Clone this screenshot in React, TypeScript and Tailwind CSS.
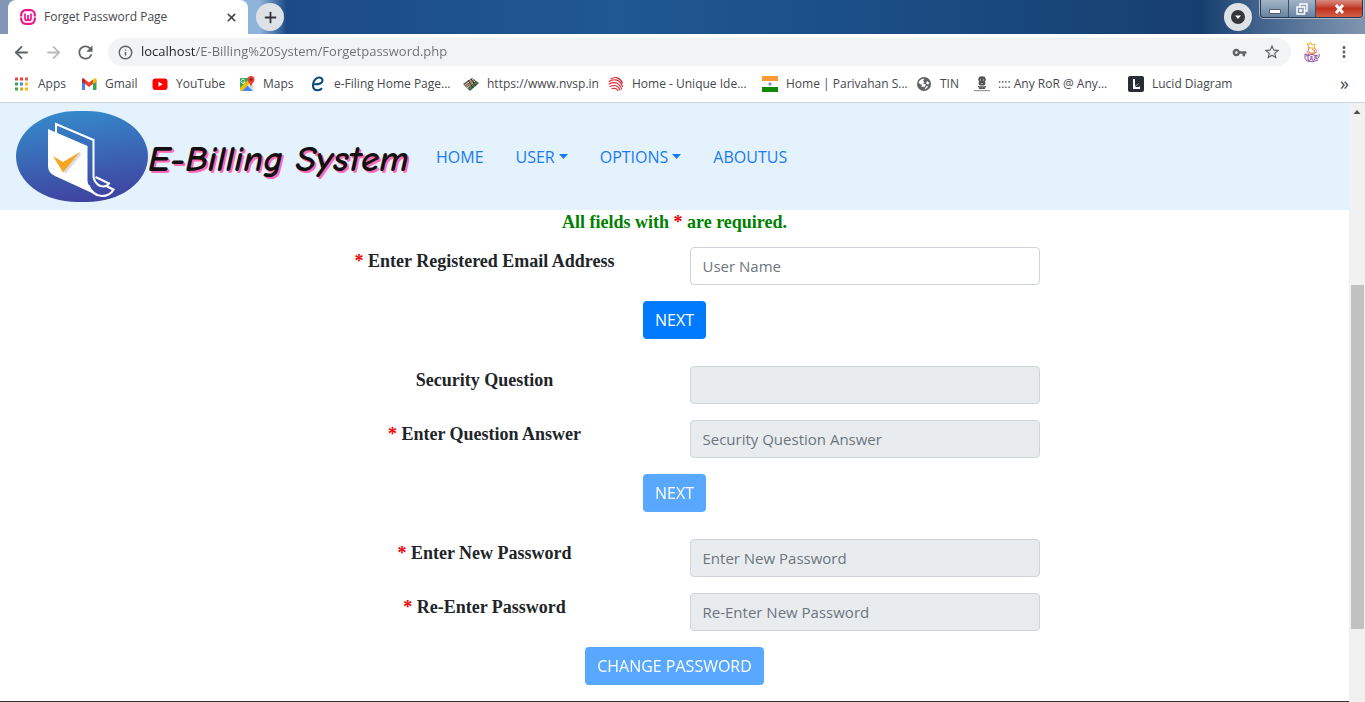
import { useId, useState } from "react";
import type { ReactNode } from "react";
import { ArrowLeft, ArrowRight, X, Plus, Info } from "lucide-react";
import { MdRefresh, MdMoreVert, MdVpnKey, MdStarBorder } from "react-icons/md";

const AppsIcon = () => (
  <svg width="16" height="16" viewBox="0 0 16 16" aria-hidden="true">
    {[1, 6, 11].map((y, r) =>
      [1, 6, 11].map((x, c) => (
        <rect key={`${x}-${y}`} x={x} y={y + 0.5} width="3" height="3"
          fill={[["#ea4335", "#ea4335", "#d9594c"], ["#34a853", "#4285f4", "#fbbc05"], ["#34a853", "#d9a520", "#fbbc05"]][r][c]} />
      ))
    )}
  </svg>
);
const GmailIcon = () => (
  <svg width="16" height="16" viewBox="0 0 16 16" aria-hidden="true">
    <path d="M1 14V4l3 2.500V14z" fill="#4285f4" />
    <path d="M12 6.500 15.500 4v9q0 1-1 1H12z" fill="#34a853" />
    <path d="M4 3.500 8 6.500l4-3V8l-4 3-4-3z" fill="#ea4335" />
    <path d="M1 3.500q0-2 2-1l1 1V8L1 5.700z" fill="#c5221f" />
    <path d="M12 3.500q3.500-2.500 3.500 0v2.200L12 8z" fill="#fbbc04" />
  </svg>
);
const YoutubeIcon = () => (
  <svg width="16" height="16" viewBox="0 0 16 16" aria-hidden="true">
    <rect x="0.500" y="2.500" width="15" height="11.500" rx="3" fill="#f00" />
    <path d="M6.500 5.700v5l4.200-2.500z" fill="#fff" />
  </svg>
);
const MapsIcon = () => (
  <svg width="16" height="16" viewBox="0 0 16 16" aria-hidden="true">
    <path d="M1 3q0-1 1-1h8L8 7l-7 7z" fill="#34a853" />
    <path d="m1 12 8-8 2 3-8 8H1z" fill="#fbbc04" />
    <path d="m3 15 5.500-5.500L14 15z" fill="#4285f4" />
    <path d="m9 9 3-2 2.500 3v5z" fill="#d8d8d8" />
    <path d="M12 0a3.500 3.500 0 0 1 3.500 3.500C15.500 6 12.800 7 12 11c-.8-4-3.500-5-3.500-7.500A3.500 3.500 0 0 1 12 0z" fill="#ea4335" />
    <circle cx="12" cy="3.500" r="1.300" fill="#7b1c14" />
    <path d="M5.800 4.300A2 2 0 1 0 6 6H4.500" fill="none" stroke="#fff" />
  </svg>
);
const EfilingIcon = () => (
  <svg width="16" height="16" viewBox="0 0 16 16" aria-hidden="true">
    <path d="M4 8.200c5 .3 8.500-1 8.500-3.700C12.500 2.500 11 1.500 9 1.500c-3.200 0-6 3.700-6 7.700 0 3.300 2 5 4.600 5 2 0 3.400-.8 4.400-1.900" fill="none" stroke="#0a4a80" strokeWidth="2.100" />
  </svg>
);
const NvspIcon = () => (
  <svg width="16" height="16" viewBox="0 0 16 16" aria-hidden="true">
    <path d="m0 8 9-6 7 5-9 8z" fill="#555" />
    <path d="m2 9 8-6M4 12l8-7" stroke="#ddd" />
    <path d="m3 10.500 8-6.500" stroke="#e08030" strokeWidth="1.300" />
    <path d="m5.500 13.500 8-7" stroke="#3b9140" strokeWidth="1.500" />
    <path d="m5 4 5 8M8 3l5 7" stroke="#333" />
  </svg>
);
const AadhaarIcon = () => (
  <svg width="16" height="16" viewBox="0 0 16 16" fill="none" stroke="#d8232f" strokeWidth="1.100" strokeLinecap="round" aria-hidden="true">
    <path d="M3 3c4-2.800 9-1.500 11.500 4M1 5.500c5-3.300 11-2 13.500 5M1 8c5-2.800 10.500-1.500 12.500 5M2 10.500c4.500-2 8-1 10 3.500M4 12.500c3-.8 4.500 0 6 2" />
  </svg>
);
const FlagIcon = () => (
  <svg width="16" height="16" viewBox="0 0 16 16" aria-hidden="true">
    <path d="M0 0h16v5H0z" fill="#f93" />
    <path d="M0 5h16v6H0z" fill="#fff" />
    <path d="M0 11h16v5H0z" fill="#128807" />
    <circle cx="8" cy="8" r="1.700" fill="#8a92c0" />
  </svg>
);
const EmblemIcon = () => (
  <svg width="16" height="16" viewBox="0 0 16 16" fill="#555" aria-hidden="true">
    <path d="M5 1q3-1.500 6 0l1 3-1 1 .5 3-1.500 1.500H6L4.500 8 5 5 4 4zM4 10h8v1.500H4zM5 11.500h6V13H5z" />
    <path d="M0 14h16v1.200H0z" fill="#999" />
    <path d="M6.500 3v2M9.500 3v2M7 7.500h2M5 10.800h6" stroke="#bbb" strokeWidth=".7" />
  </svg>
);
const LucidIcon = () => (
  <svg width="16" height="16" viewBox="0 0 16 16" aria-hidden="true">
    <rect width="16" height="16" rx="2" fill="#282c33" />
    <path d="M5 3h2v7l4-3v3.500h1V13H5z" fill="#fff" />
    <path d="m7 11 4-4v4z" fill="#282c33" />
  </svg>
);
const GlobeIcon = () => (
  <svg width="16" height="16" viewBox="0 0 16 16" aria-hidden="true">
    <circle cx="8" cy="8" r="7" fill="#5f6368" />
    <path d="M2.500 7C3 4.500 5.500 2.500 8.500 2.800L7 5l1.500 1L7 7.500l3 1L8.500 11 5 10.500 6 9zM11 5l2.500 2-1.500 1.500-2-1zM10 10.500l2.500-1q-1 3-4 4z" fill="#fff" />
  </svg>
);
const WampIcon = () => (
  <svg width="16" height="16" viewBox="0 0 16 16" fill="none" stroke="#f0148c" aria-hidden="true">
    <rect x="1.200" y="1.200" width="13.600" height="13.600" rx="4.500" strokeWidth="2.200" />
    <path d="M5 4.500v4.800q0 2 1.500 2T8 9.500V6v3.500q0 1.800 1.500 1.800t1.500-2V4.500" strokeWidth="1.700" />
    <path d="M0 8h3M13 8h3" stroke="#fff" />
  </svg>
);
const AvatarIcon = () => (
  <svg width="18" height="22" viewBox="0 0 18 22" fill="none" aria-hidden="true">
    <path d="m4 2 2 2 1.500-3L9 4l3-1-1 4H6z" stroke="#f2b233" />
    <path d="M6 6q-2 4 1 6 4 1 5-2L9 8M11 7q4 2 1 5M4 10q1 4 6 3l4-2" stroke="#ef7a4c" />
    <path d="M2 13q-1 5 2 7M2 13q3 1 4 0M5 15v4q2 1 3-1v-3M9 15v4q2 1 3-1v-3M13 14v4q4-1 3-5M4 20q6 2 11-1M3 15q6-3 12 0" stroke="#8d4aa0" />
  </svg>
);

const bookmarks: { label: string; icon: ReactNode; width: string }[] = [
  { label: "Apps", icon: <AppsIcon />, width: "w-[67px]" },
  { label: "Gmail", icon: <GmailIcon />, width: "w-[71px]" },
  { label: "YouTube", icon: <YoutubeIcon />, width: "w-[87px]" },
  { label: "Maps", icon: <MapsIcon />, width: "w-[71px]" },
  { label: "e-Filing Home Page...", icon: <EfilingIcon />, width: "w-[153px]" },
  { label: "https://www.nvsp.in", icon: <NvspIcon />, width: "w-[145px]" },
  { label: "Home - Unique Ide...", icon: <AadhaarIcon />, width: "w-[154px]" },
  { label: "Home | Parivahan S...", icon: <FlagIcon />, width: "w-[154px]" },
  { label: "TIN", icon: <GlobeIcon />, width: "w-[58px]" },
  { label: ":::: Any RoR @ Any...", icon: <EmblemIcon />, width: "w-[154px]" },
  { label: "Lucid Diagram", icon: <LucidIcon />, width: "w-[110px]" },
];

function TitleBar() {
  return (
    <div className="flex h-[34px] items-start bg-[linear-gradient(90deg,#8297b5_0%,#8fb4dc_19%,#1b4a87_21%,#1f5893_45%,#194a80_70%,#173f6e_88%,#3f618b_92%,#8096b0_100%)]">
      <div className="ml-2 flex h-[34px] w-[240px] items-center rounded-t-lg bg-white pr-2.5 pl-3">
        <WampIcon />
        <span className="ml-2 flex-1 text-xs text-[#45494d]">Forget Password Page</span>
        <button aria-label="Close tab" className="text-[#3c4043]"><X size={13} strokeWidth={3} /></button>
      </div>
      <button aria-label="New tab" className="mt-[3px] ml-2 flex size-7 items-center justify-center rounded-full bg-[#dee1e6] text-[#333]">
        <Plus size={17} strokeWidth={2.500} />
      </button>
      <button aria-label="Search tabs" className="mt-[3px] ml-auto flex size-7 items-center justify-center rounded-full bg-[#dee1e6]">
        <svg width="14" height="14" viewBox="0 0 14 14"><circle cx="7" cy="7" r="7" fill="#35363a" /><path d="M4 5.500h6L7 9z" fill="#fff" /></svg>
      </button>
      <div className="mr-0.5 ml-2 flex h-[18px] overflow-hidden rounded-b border border-t-0 border-[#26364c] text-white shadow-[0_0_0_1px_#a9b8ca]">
        <button aria-label="Minimize" className="flex w-7 items-center justify-center border-r border-[#3c5068] bg-linear-to-b from-[#a3b3c6] to-[#6884a4] pt-1">
          <svg width="12" height="6" viewBox="0 0 12 6"><path d="M.500 1.500h11v4H.500z" fill="#fff" stroke="#56606c" /></svg>
        </button>
        <button aria-label="Restore" className="flex w-[27px] items-center justify-center border-r border-[#3c5068] bg-linear-to-b from-[#a3b3c6] to-[#6884a4]">
          <svg width="12" height="12" viewBox="0 0 12 12" fill="none" stroke="#fff" strokeWidth="1.500"><path d="M4 3V1h7v7H9M1 4h7.500v7H1zM4 7h1.500v1H4z" /></svg>
        </button>
        <button aria-label="Close" className="flex w-[46px] items-center justify-center bg-linear-to-b from-[#d88a80] via-[#c0301c] to-[#cf6048]">
          <svg width="11" height="10" viewBox="0 0 11 10"><path d="m2 1 7 8M9 1 2 9" stroke="#fff" strokeWidth="2.800" /></svg>
        </button>
      </div>
    </div>
  );
}

function Toolbar() {
  const [address, setAddress] = useState("localhost/E-Billing%20System/Forgetpassword.php");
  return (
    <div className="flex h-9 items-center pr-3 pl-3 text-[#5f6368]">
      <button aria-label="Back"><ArrowLeft size={19} strokeWidth={2.300} /></button>
      <button aria-label="Forward" className="ml-[13px] text-[#bbb]"><ArrowRight size={19} strokeWidth={2.300} /></button>
      <button aria-label="Reload" className="ml-3"><MdRefresh size={21} /></button>
      <div className="ml-3 flex h-7 flex-1 items-center rounded-full bg-[#f1f3f4] px-2.5">
        <Info size={15} strokeWidth={2.300} className="rotate-0" />
        <input aria-label="Address" type="text" value={address} onChange={(e) => setAddress(e.target.value)}
          className="ml-2 min-w-0 flex-1 bg-linear-to-r from-[#202124] from-[55px] to-[#6b6f73] to-[55px] bg-clip-text text-[13px] text-transparent caret-black outline-none" />
        <button aria-label="Saved passwords"><MdVpnKey size={15} /></button>
        <button aria-label="Bookmark this page" className="ml-4"><MdStarBorder size={18} /></button>
      </div>
      <button aria-label="Profile" className="ml-3"><AvatarIcon /></button>
      <button aria-label="Menu" className="ml-3.5"><MdMoreVert size={18} /></button>
    </div>
  );
}

function Bookmarks() {
  return (
    <nav aria-label="Bookmarks" className="flex h-[33px] items-center border-b border-[#cdd3dc] pr-4 pb-1 pl-3.5 text-[#45494d]">
      {bookmarks.map((b) => (
        <a key={b.label} href="#" className={`flex shrink-0 items-center gap-2 whitespace-nowrap text-xs ${b.width}`}>
          <span className="shrink-0">{b.icon}</span>
          {b.label}
        </a>
      ))}
      <button aria-label="More bookmarks" className="ml-auto pb-0.5 text-lg leading-4">»</button>
    </nav>
  );
}

function Logo() {
  return (
    <svg width="132" height="92" viewBox="0 0 132 92" aria-hidden="true">
      <defs>
        <linearGradient id="logo-fill" x1="0.400" y1="0" x2="0.600" y2="1">
          <stop offset="0" stopColor="#3589cb" />
          <stop offset="1" stopColor="#4042a0" />
        </linearGradient>
      </defs>
      <rect width="132" height="91" rx="61" ry="45.500" fill="url(#logo-fill)" />
      <path d="M40 24V13l37.500 16V66q1.500 7 7 9 6 1.500 8.500-2.500L79.500 66" fill="none" stroke="#fff" strokeWidth="2" />
      <path d="M32 18l39.500 17v35q1 10 10 14.500L39 65q-7-3-7-10z" fill="#fff" />
      <path d="M72 74q5 11 14 11 8 0 11.500-6.500L91 75.500" fill="none" stroke="#fff" strokeWidth="2.200" />
      <path d="m47 61 17-20 1 3-15 18z" fill="#d9dce6" />
      <path d="m37 45 10 6 17-10-17 20.500z" fill="#f5a623" />
    </svg>
  );
}

const Caret = () => <svg width="9" height="5" viewBox="0 0 9 5" aria-hidden="true"><path d="M0 0h9L4.500 5z" fill="currentColor" /></svg>;

function SiteHeader() {
  return (
    <header className="flex h-[107px] items-center bg-[#e3f2fd] pl-4">
      <a href="#" className="flex items-center">
        <Logo />
        <span className="w-[272px] whitespace-nowrap pt-1 text-[37px] leading-[44px] font-bold italic text-[#111] [font-family:'Comic_Sans_MS','Comic_Neue','Open_Sans',cursive] [text-shadow:2px_2px_0_#ff69b4]">E-Billing System</span>
      </a>
      <nav aria-label="Main" className="ml-4 flex items-center gap-8 text-base text-[#1a7bf2]">
        <a href="#">HOME</a>
        <button className="flex items-center gap-1">USER<Caret /></button>
        <button className="flex items-center gap-1">OPTIONS<Caret /></button>
        <a href="#">ABOUTUS</a>
      </nav>
    </header>
  );
}

function Field({ label, placeholder, required = false, disabled = false, type = "text" }: { label: string; placeholder?: string; required?: boolean; disabled?: boolean; type?: string }) {
  const id = useId();
  const [value, setValue] = useState("");
  return (
    <div className="grid grid-cols-2 gap-[30px]">
      <label htmlFor={id} className="pt-0.5 text-center text-lg leading-6 font-bold [font-family:'Liberation_Serif',serif]">
        {required && <span className="text-[#f00000]">* </span>}{label}
      </label>
      <input id={id} type={type} value={value} onChange={(e) => setValue(e.target.value)} placeholder={placeholder} disabled={disabled}
        className="h-[38px] w-full rounded border border-[#ced4da] px-3 text-[15px] text-[#495057] placeholder:text-[#6c757d] disabled:bg-[#e9ecef]" />
    </div>
  );
}

function Action({ children, disabled = false }: { children: ReactNode; disabled?: boolean }) {
  return (
    <button type="button" disabled={disabled} className="h-[38px] self-center rounded bg-[#007bff] px-3 text-base text-white disabled:opacity-65">{children}</button>
  );
}

function ResetForm() {
  return (
    <form className="mx-auto w-full max-w-[730px] pb-4 text-[#212529]">
      <p className="pb-3 text-center text-lg leading-[25px] font-bold text-[#008000] [font-family:'Liberation_Serif',serif]">
        All fields with <span className="text-[#f00000]">*</span> are required.
      </p>
      <div className="flex flex-col gap-[27px]">
        <div className="flex flex-col gap-4">
          <Field required label="Enter Registered Email Address" placeholder="User Name" />
          <Action>NEXT</Action>
        </div>
        <div className="flex flex-col gap-4">
          <Field disabled label="Security Question" />
          <Field disabled required label="Enter Question Answer" placeholder="Security Question Answer" />
          <Action disabled>NEXT</Action>
        </div>
        <div className="flex flex-col gap-4">
          <Field disabled required type="password" label="Enter New Password" placeholder="Enter New Password" />
          <Field disabled required type="password" label="Re-Enter Password" placeholder="Re-Enter New Password" />
          <Action disabled>CHANGE PASSWORD</Action>
        </div>
      </div>
    </form>
  );
}

function Scrollbar() {
  return (
    <div aria-hidden="true" className="flex w-4 shrink-0 flex-col items-center bg-[#f1f1f1]">
      <svg className="shrink-0" width="16" height="17" viewBox="0 0 16 17"><path d="M4.500 11 8 7l3.500 4z" fill="#505050" /></svg>
      <div className="grow-[165]" />
      <div className="w-[13px] grow-[344] bg-[#c1c1c1]" />
      <div className="grow-[73]" />
    </div>
  );
}

export default function App() {
  return (
    <div className="flex min-h-screen flex-col bg-white [font-family:'Open_Sans','Noto_Sans',sans-serif]">
      <TitleBar />
      <Toolbar />
      <Bookmarks />
      <div className="flex flex-1">
        <main className="min-w-0 flex-1 border-b border-[#333]">
          <SiteHeader />
          <ResetForm />
        </main>
        <Scrollbar />
      </div>
    </div>
  );
}
